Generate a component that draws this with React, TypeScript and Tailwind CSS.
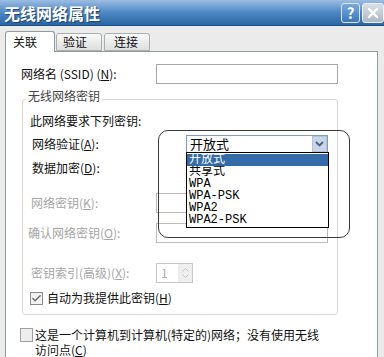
import { Check } from 'lucide-react'

const authOptions = ['开放式', '共享式', 'WPA', 'WPA-PSK', 'WPA2', 'WPA2-PSK']

function Combo({ value }: { value?: string }) {
  return (
    <div className="w-[142px] h-[18px] bg-white border border-[#7f9db9] flex items-center">
      <span className="flex-1 pl-[3px] text-[13px] leading-[16px] text-black">{value}</span>
      <span className="w-[15px] h-[16px] bg-[#c9d6e8] border border-[#b3c3dc] flex items-center justify-center">
        <svg width="9" height="6" viewBox="0 0 9 6">
          <path d="M1 1 L4.5 4.5 L8 1" fill="none" stroke="#4d6185" strokeWidth="1.8" />
        </svg>
      </span>
    </div>
  )
}

export default function App() {
  return (
    <div className="w-[384px] h-[357px] overflow-hidden bg-[#ebebeb] flex flex-col font-['Noto_Sans_CJK_SC','Liberation_Sans',sans-serif] text-[12px] text-[#111]">

      {/* 标题栏 */}
      <div className="h-[26px] shrink-0 bg-gradient-to-b from-[#9cbde2] via-[#4d88c3] to-[#2b66a4] border-b border-[#1d4f86] flex items-center">
        <span className="pl-[4px] flex-1 text-white text-[16px] font-bold leading-[20px] [text-shadow:1px_1px_1px_#1b3f6b]">
          无线网络属性
        </span>
        <span className="w-[19px] h-[20px] mr-[2px] rounded-[3px] border border-[#d8e6f5] bg-gradient-to-b from-[#7aa8dc] to-[#3c77bb] flex items-center justify-center text-white font-bold text-[15px] leading-none">
          ?
        </span>
        <span className="w-[22px] h-[20px] rounded-[3px] border border-[#eef2f6] bg-gradient-to-b from-[#d9dfe6] to-[#aeb9c6] flex items-center justify-center">
          <svg width="12" height="12" viewBox="0 0 12 12">
            <path d="M2 2 L10 10 M10 2 L2 10" stroke="white" strokeWidth="2.4" strokeLinecap="round" />
          </svg>
        </span>
      </div>

      <div className="flex-1 flex flex-col pl-[5px] pr-[6px] pt-[4px]">
        {/* 选项卡 */}
        <div className="h-[21px] flex items-end relative z-10">
          <div className="w-[50px] h-[21px] -mb-px bg-white border border-[#919b9c] border-b-0 rounded-t-[3px] pl-[7px] pt-[2px] leading-[16px]">关联</div>
          <div className="w-[46px] h-[18px] ml-[1px] bg-gradient-to-b from-[#fafafa] to-[#dedede] border border-[#a9aeb0] rounded-t-[3px] pl-[6px] leading-[16px]">验证</div>
          <div className="w-[46px] h-[18px] ml-[2px] bg-gradient-to-b from-[#fafafa] to-[#dedede] border border-[#a9aeb0] rounded-t-[3px] pl-[9px] leading-[16px]">连接</div>
        </div>

        {/* 面板 */}
        <div className="flex-1 bg-white border border-[#919b9c] relative flex flex-col">
          <div className="mt-[12px] h-[20px] flex items-center pl-[15px]">
            <span className="w-[135px]">网络名 (SSID) (<u>N</u>):</span>
            <div className="w-[182px] h-[20px] border border-[#a8a8a8] bg-white" />
          </div>

          <fieldset className="mt-[5px] ml-[16px] w-[316px] border border-[#d8d8d0] rounded-[3px] pl-[7px] pb-[9px]">
            <legend className="-ml-[4px] px-[2px] pb-[6px] leading-[14px] text-[#444]">无线网络密钥</legend>

            <div className="mt-[5px] h-[14px] leading-[14px]">此网络要求下列密钥:</div>

            <div className="mt-[7px] h-[18px] flex items-center">
              <span className="w-[156px] pl-[2px]">网络验证(<u>A</u>):</span>
              <div className="relative">
                <Combo value="开放式" />
                {/* 下拉列表 */}
                <div className="absolute left-0 top-[17px] w-[143px] h-[76px] bg-white border border-black py-[1px] z-20">
                  {authOptions.map((o, i) => (
                    <div
                      key={o}
                      className={`h-[12px] pl-[2px] flex items-center overflow-hidden font-['Liberation_Mono','Noto_Sans_CJK_SC',monospace] text-[12px] leading-[12px] ${
                        i === 0 ? 'bg-[#336ca8] text-white' : 'text-black'
                      }`}
                    >
                      {o}
                    </div>
                  ))}
                </div>
              </div>
            </div>

            <div className="mt-[6px] h-[18px] flex items-center">
              <span className="w-[156px] pl-[2px]">数据加密(<u>D</u>):</span>
              <Combo />
            </div>

            <div className="mt-[16px] h-[20px] flex items-center text-[#a6a6a6]">
              <span className="w-[126px] pl-[1px]">网络密钥(<u>K</u>):</span>
              <div className="w-[172px] h-[20px] border border-[#bdbdb5] bg-white" />
            </div>

            <div className="mt-[10px] h-[20px] flex items-center text-[#a6a6a6]">
              <span className="w-[126px] -ml-[2px]">确认网络密钥(<u>O</u>):</span>
              <div className="w-[172px] h-[20px] ml-[2px] border border-[#bdbdb5] bg-white" />
            </div>

            <div className="mt-[20px] h-[20px] flex items-center text-[#a6a6a6]">
              <span className="w-[126px] pl-[1px]">密钥索引(高级)(<u>X</u>):</span>
              <div className="w-[37px] h-[20px] border border-[#c8c8c0] bg-white flex items-center">
                <span className="flex-1 pl-[4px] text-[#b0b0b0]">1</span>
                <span className="w-[14px] h-[18px] bg-[#eeeeee] flex flex-col items-center justify-center gap-[2px]">
                  <svg width="7" height="4" viewBox="0 0 7 4"><path d="M0.5 3.5 L3.5 0.5 L6.5 3.5" fill="none" stroke="#c4c4c4" /></svg>
                  <svg width="7" height="4" viewBox="0 0 7 4"><path d="M0.5 0.5 L3.5 3.5 L6.5 0.5" fill="none" stroke="#c4c4c4" /></svg>
                </span>
              </div>
            </div>

            <div className="mt-[8px] h-[14px] flex items-center">
              <span className="w-[13px] h-[13px] border border-[#8c8c8c] bg-[#f2f2f2] flex items-center justify-center">
                <Check size={11} strokeWidth={3} className="text-[#6b6b6b]" />
              </span>
              <span className="ml-[4px] leading-[14px]">自动为我提供此密钥(<u>H</u>)</span>
            </div>
          </fieldset>

          <div className="mt-[12px] pl-[14px] flex items-start">
            <span className="w-[13px] h-[14px] mt-[1px] border border-[#a0a0a0] bg-[#ededed] shrink-0" />
            <span className="ml-[2px] leading-[15px]">
              这是一个计算机到计算机(特定的)网络；没有使用无线<br />访问点(<u>C</u>)
            </span>
          </div>

          {/* 标注框 */}
          <div className="absolute left-[152px] top-[78px] w-[192px] h-[108px] border border-[#3a3a3a] rounded-[10px] pointer-events-none z-30" />
        </div>
      </div>
    </div>
  )
}
